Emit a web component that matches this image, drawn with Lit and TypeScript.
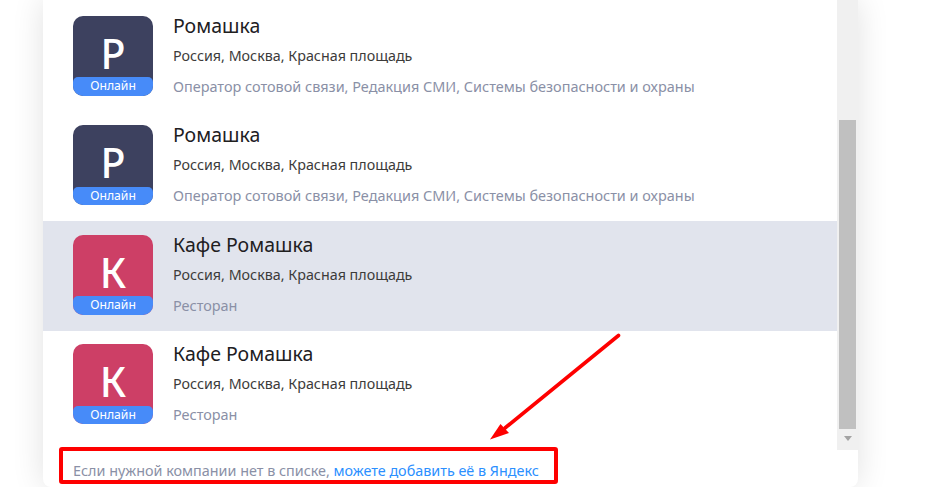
import {LitElement, html, css} from 'lit';
import {customElement} from 'lit/decorators.js';

const OPERATOR = 'Оператор сотовой связи, Редакция СМИ, Системы безопасности и охраны';

const ITEMS = [
  {name: 'Ромашка', letter: 'Р', kind: 'dark', about: OPERATOR, active: false},
  {name: 'Ромашка', letter: 'Р', kind: 'dark', about: OPERATOR, active: false},
  {name: 'Кафе Ромашка', letter: 'К', kind: 'red', about: 'Ресторан', active: true},
  {name: 'Кафе Ромашка', letter: 'К', kind: 'red', about: 'Ресторан', active: false},
];

@customElement('app-root')
export class AppRoot extends LitElement {
  override render() {
    return html`
      <div class="card">
        <div class="body">
          <div class="list">
            ${ITEMS.map(
              (item) => html`
                <div class="row ${item.active ? 'active' : ''}">
                  <div class="avatar ${item.kind}">
                    <div class="letter">${item.letter}</div>
                    <div class="badge">Онлайн</div>
                  </div>
                  <div class="info">
                    <div class="name">${item.name}</div>
                    <div class="address">Россия, Москва, Красная площадь</div>
                    <div class="about">${item.about}</div>
                  </div>
                </div>
              `
            )}
          </div>
          <div class="scrollbar">
            <div class="thumb"></div>
            <div class="down"></div>
          </div>
        </div>
        <div class="footer">
          Если нужной компании нет в списке,
          <a class="link">можете добавить её в Яндекс</a>
        </div>
      </div>
      <svg class="marks" width="933" height="487" viewBox="0 0 933 487">
        <rect x="61" y="449" width="495" height="33" rx="1" fill="none" stroke="#fe0000" stroke-width="4" />
        <line x1="618.5" y1="335.5" x2="505" y2="428" stroke="#fe0000" stroke-width="3.6" stroke-linecap="round" />
        <path d="M490 439.5 L500.5 424 L509 433 Z" fill="#fe0000" />
      </svg>
    `;
  }

  static override styles = css`
    :host {
      display: block;
      position: relative;
      height: 487px;
      overflow: hidden;
      background: #fff;
      font-family: 'Noto Sans', 'Liberation Sans', sans-serif;
    }

    .card {
      width: 815px;
      height: 487px;
      margin-left: 43px;
      border-radius: 0 0 8px 8px;
      background: #fff;
      box-shadow: 0 0 32px rgba(0, 0, 0, 0.12);
    }

    .body {
      display: flex;
      height: 450px;
    }

    .list {
      flex: 1;
      padding-top: 1.9px;
    }

    .row {
      display: flex;
      gap: 20px;
      height: 109.5px;
      padding: 14px 0 0 30px;
      box-sizing: border-box;
    }

    .row.active {
      height: 110px;
      background: #e1e4ed;
    }

    .row.active + .row {
      margin-top: -0.5px;
    }

    .avatar {
      display: flex;
      flex-direction: column;
      width: 80px;
      height: 80px;
      border-radius: 10px;
      overflow: hidden;
      color: #fff;
    }

    .avatar.dark {
      background: #3d415f;
    }

    .avatar.red {
      background: #cd3f66;
    }

    .letter {
      flex: 1;
      padding-top: 13px;
      font-size: 41px;
      font-weight: 500;
      line-height: 48px;
      text-align: center;
    }

    .badge {
      height: 18.6px;
      border-radius: 5px 5px 0 0;
      background: #478bf9;
      font-size: 12.2px;
      line-height: 18px;
      text-align: center;
    }

    .info {
      min-width: 0;
      margin-top: -2px;
    }

    .name {
      color: #21201f;
      font-size: 19.5px;
      line-height: 24px;
      margin-bottom: 8px;
    }

    .address {
      color: #3c3b3a;
      font-size: 14.3px;
      line-height: 20px;
      margin-bottom: 11px;
    }

    .about {
      color: #8a90a6;
      font-size: 14.45px;
      line-height: 20px;
      white-space: nowrap;
    }

    .scrollbar {
      display: flex;
      flex-direction: column;
      align-items: center;
      width: 21px;
      background: #f0f0f0;
    }

    .thumb {
      width: 17px;
      height: 309px;
      margin-top: 120px;
      background: #c0c0c0;
    }

    .down {
      width: 0;
      height: 0;
      margin-top: 7px;
      border-left: 4.5px solid transparent;
      border-right: 4.5px solid transparent;
      border-top: 5px solid #a3a3a3;
    }

    .footer {
      padding: 11px 0 0 30px;
      color: #8a90a6;
      font-size: 14.37px;
      line-height: 20px;
    }

    .link {
      color: #2b8fff;
    }

    .marks {
      position: absolute;
      top: 0;
      left: 0;
    }
  `;
}
